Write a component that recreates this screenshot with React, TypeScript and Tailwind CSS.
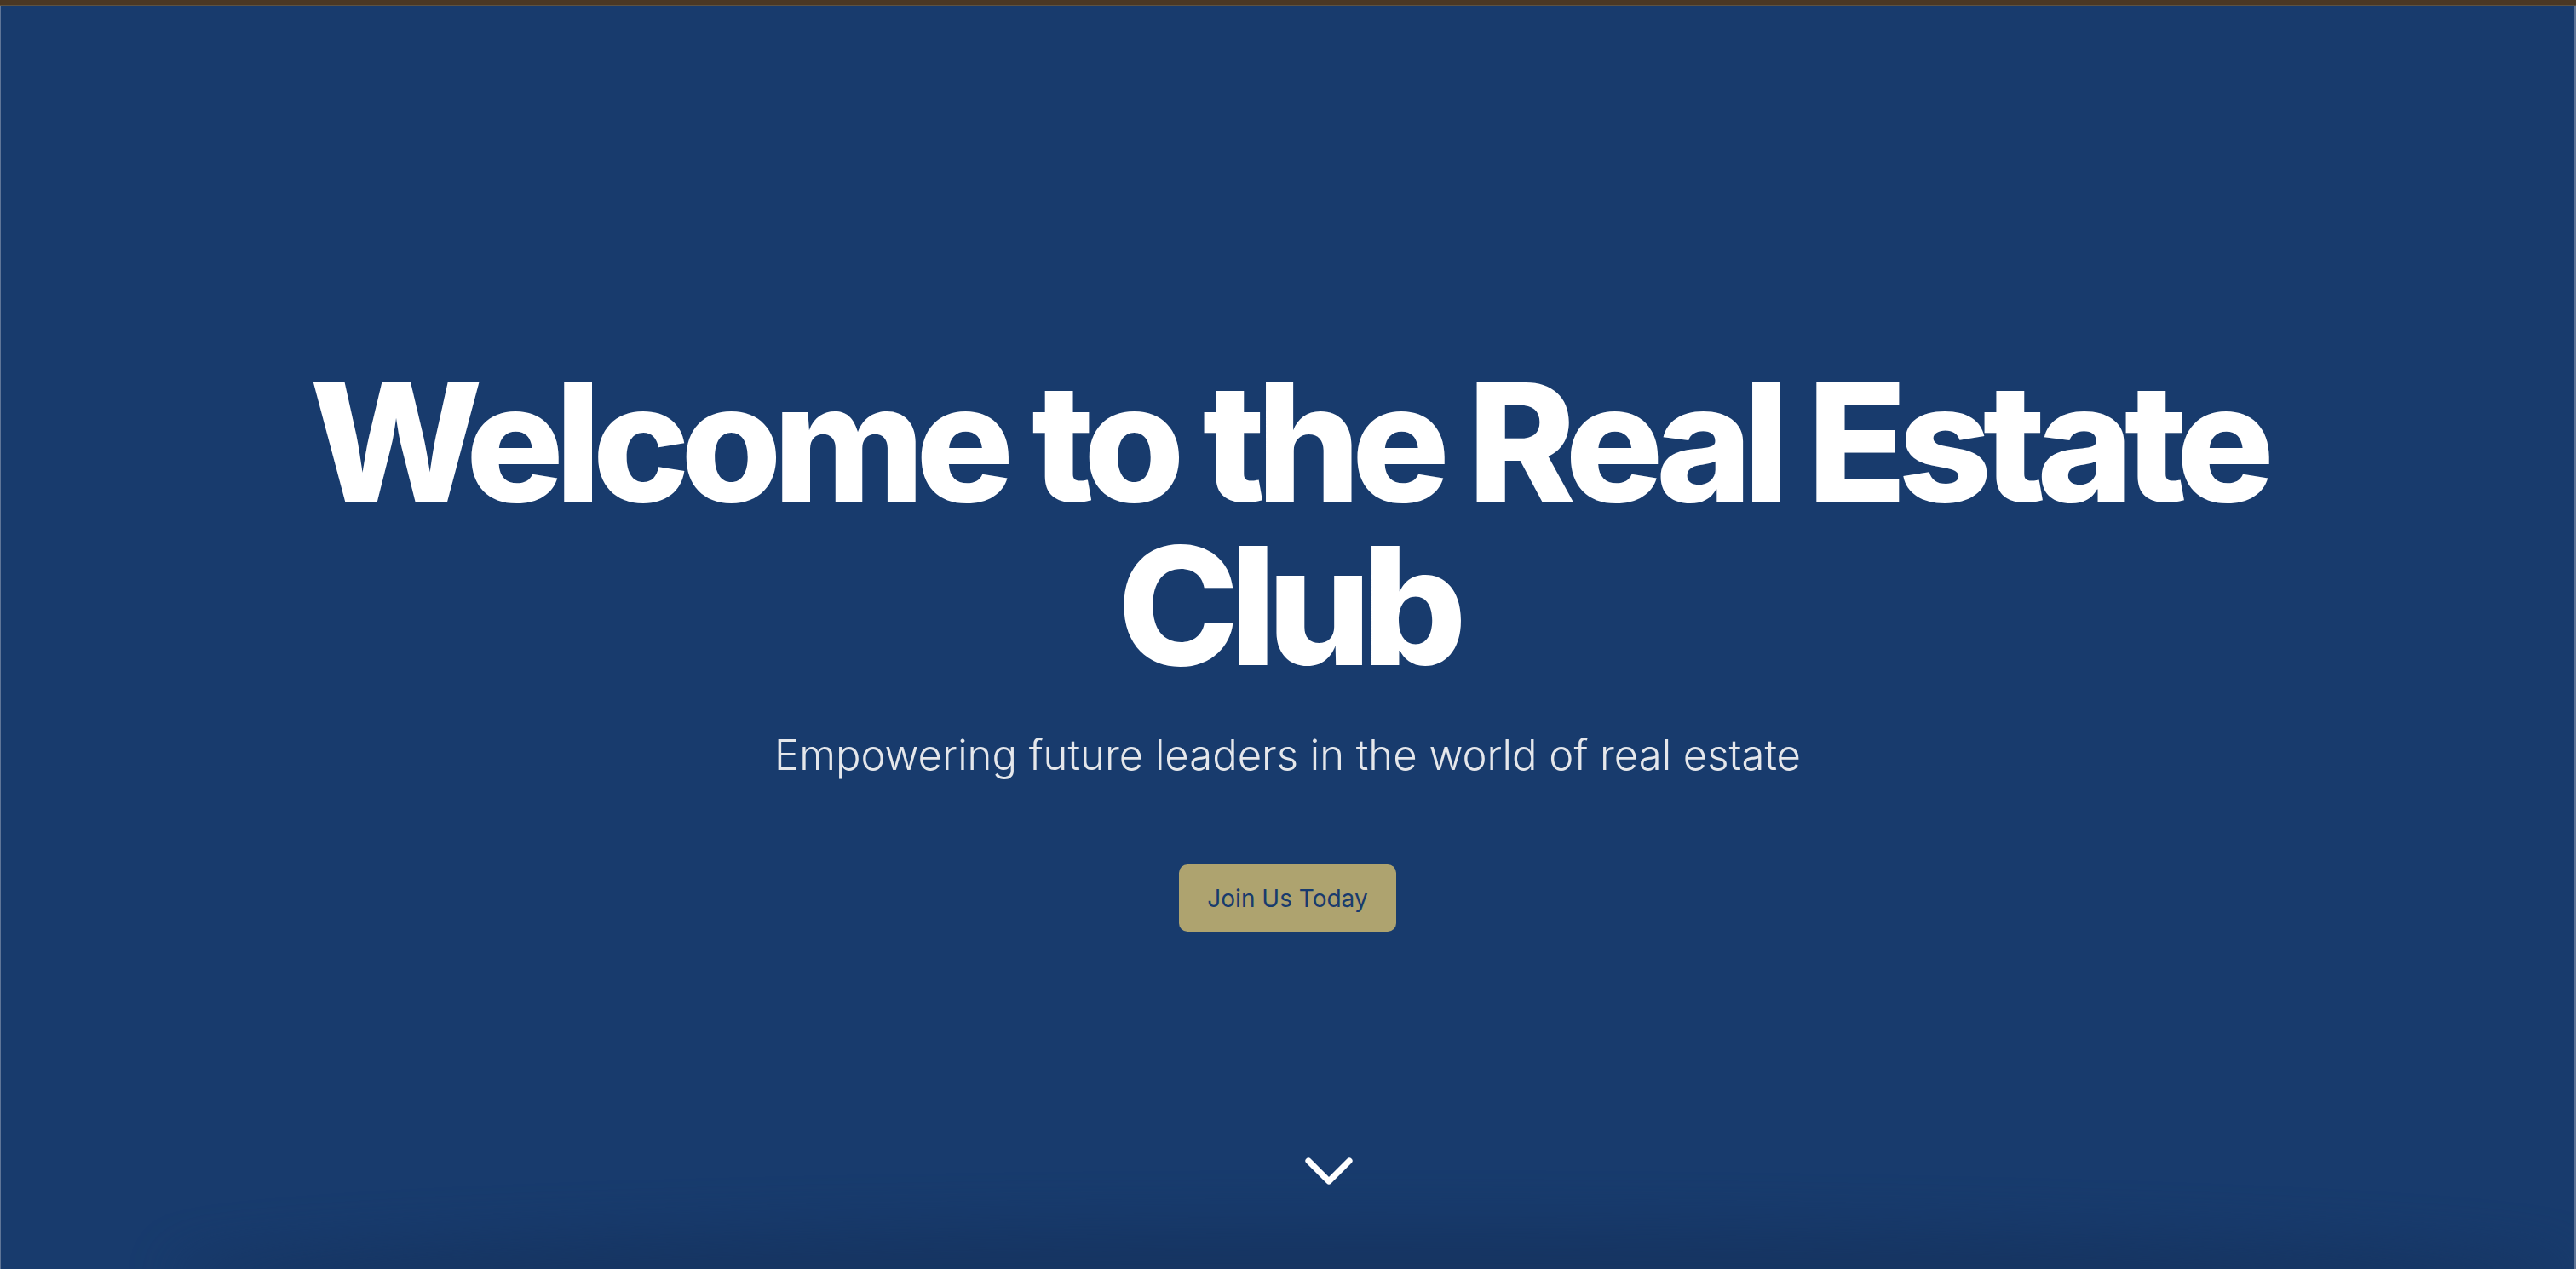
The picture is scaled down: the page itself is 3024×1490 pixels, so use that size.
import { ChevronDown } from 'lucide-react';

export default function App() {
  return (
    <div className="h-[1490px] w-full bg-[#4a3723] flex flex-col font-['Inter',sans-serif]">
      <div className="h-[6px] shrink-0" />
      <div className="h-px shrink-0 bg-[#5c5242]" />

      <section className="relative flex-1 overflow-hidden bg-[#183b6d] border-l border-l-[#5f7597] border-r-2 border-r-[#5f7597]">
        {/* soft shadow from the section below */}
        <div className="pointer-events-none absolute -bottom-[60px] left-[200px] right-0 h-[110px] rounded-[50%] bg-[#15325d] blur-[30px] opacity-70" />

        <div className="relative flex flex-col items-center pt-[416px] text-center">
          <h1 className="text-[192px] leading-none font-extrabold tracking-[-0.055em] text-white max-w-[2440px]">
            Welcome to the Real Estate Club
          </h1>
          <p className="mt-[44px] text-[49px] leading-[72px] font-light text-[#e5e7eb]">
            Empowering future leaders in the world of real estate
          </p>
          <button className="mt-[92px] h-[79px] px-[33px] rounded-[10px] bg-[#aea36f] text-[28px] font-normal text-[#183b6d]">
            Join Us Today
          </button>
        </div>

        <div className="absolute left-1/2 bottom-[67px] text-white">
          <ChevronDown size={96} strokeWidth={1.8} />
        </div>
      </section>
    </div>
  );
}
